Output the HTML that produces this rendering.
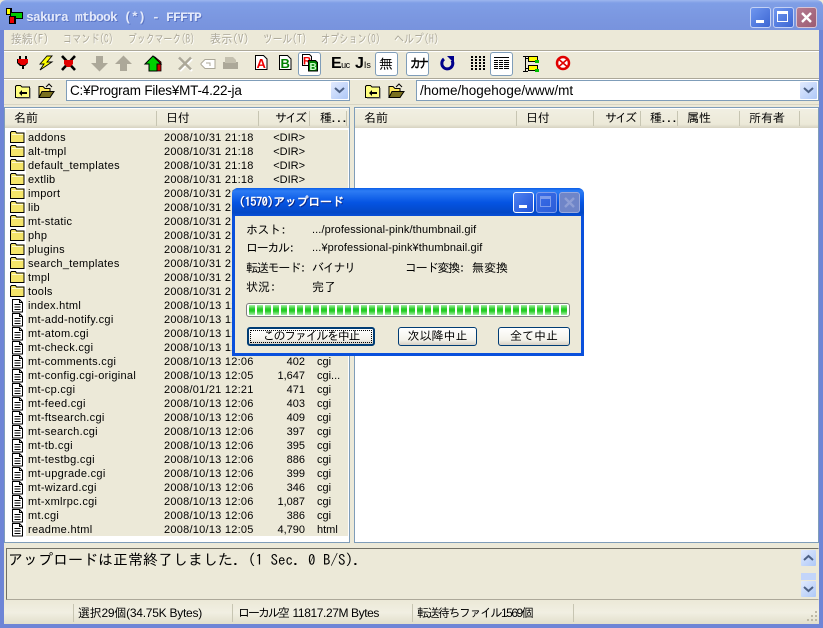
<!DOCTYPE html>
<html lang="ja"><head><meta charset="utf-8"><title>FFFTP</title>
<style>
html,body{margin:0;padding:0}
body{width:823px;height:628px;overflow:hidden;position:relative;background:#ece9d8;font:12px/14px "IPAGothic","Liberation Sans","Noto Sans CJK JP",sans-serif;color:#000}
div,span,svg{position:absolute;white-space:nowrap}
.menu span{top:32px;font-size:12px;color:#aca899;text-shadow:1px 1px 0 #fff;line-height:14px;transform-origin:0 0}
.hl{height:1px;background:#aca899}
.hw{height:1px;background:#fff}
.pressed{top:52px;width:21px;height:22px;background:#fff;border:1px solid #7f9db9;border-radius:3px;box-sizing:content-box}
.hdr{top:109px;height:19px;background:linear-gradient(#f1efe2 0,#ece9d8 80%,#d6d2c0 100%)}
.hdr span{top:2px;line-height:14px}
.sep{top:111px;width:1px;height:15px;background:#c7c5b2}
.row{left:0;width:346px;height:14px;line-height:14px;margin-top:1px}
.row span{top:0;font-family:"Liberation Sans","IPAGothic",sans-serif;font-size:11px}
.n{left:28px;letter-spacing:.3px}.d{left:164px;letter-spacing:.25px}.s{right:41px;width:60px;text-align:right}.t{left:317px}
.row svg{left:10px;top:-2px}
.combo{height:21px;background:#fff;border:1px solid #7f9db9;box-sizing:border-box}
.combo>div:first-child{font:13.5px/17px "Liberation Sans","IPAGothic",sans-serif}
.arrow{width:17px;height:17px;background:linear-gradient(135deg,#e1eafe,#aec8f7);border-radius:1px}
.btn{box-sizing:border-box;height:19px;border:1px solid #003c74;border-radius:3px;background:linear-gradient(#fff,#f4f2ea 70%,#d6d0c5);text-align:center;line-height:17px;font-size:12px}
.lb{font-size:12px;line-height:14px;font-family:"IPAGothic","Liberation Sans",sans-serif}
.stx{top:606px;font:12px/14px "Liberation Sans","IPAGothic",sans-serif}
.stx span{position:static}
</style></head><body>
<svg width="0" height="0"><defs>
<g id="fo"><path d="M.5 13.500V3.500l1-1h4l1 1.500h7.500v9.500z" fill="#f5e56a" stroke="#000"/><path d="M2 5.500h11" stroke="#fffbd0"/></g>
<g id="fi"><path d="M2.500 2.500h7l3 3v9.500h-10z" fill="#fff" stroke="#000"/><path d="M9.500 2.500v3h3M4.500 7.500h6M4.500 10h6M4.500 12.500h6" stroke="#000" fill="none"/></g>
</defs></svg>

<!-- window frame -->
<div style="left:0;top:0;width:823px;height:30px;background:linear-gradient(#9db6ee 0,#7f9ee6 10%,#7b97e0 60%,#7893dd 100%);border-radius:6px 6px 0 0"></div>
<div style="left:0;top:30px;width:4px;height:598px;background:#6e85d6"></div>
<div style="left:819px;top:30px;width:4px;height:598px;background:#6e85d6"></div>
<div style="left:0;top:624px;width:823px;height:4px;background:#6e85d6"></div>

<svg style="left:5px;top:7px" width="18" height="17" viewBox="0 0 18 17"><rect x="1" y="1" width="6" height="7" fill="#000"/><rect x="2" y="2" width="3" height="5" fill="#ff0"/><rect x="5" y="5" width="13" height="7" fill="#000"/><rect x="6" y="6" width="11" height="5" fill="#0c0"/><rect x="4" y="9" width="7" height="8" fill="#000"/><rect x="5" y="10" width="4" height="6" fill="#e00"/></svg>
<div style="left:26px;top:10px;font:bold 13px/15px 'Liberation Mono',monospace;color:#e3e9fa;letter-spacing:-.8px;text-shadow:1px 1px 0 #5a74c4">sakura mtbook (*) - FFFTP</div>

<!-- caption buttons -->
<div style="left:750px;top:7px;width:21px;height:21px;box-sizing:border-box;background:linear-gradient(135deg,#6f96ef,#3c66d3);border:1px solid #c4d2f5;border-radius:3px"><div style="left:5px;top:12px;width:8px;height:3px;background:#fff"></div></div>
<div style="left:773px;top:7px;width:21px;height:21px;box-sizing:border-box;background:linear-gradient(135deg,#6f96ef,#3c66d3);border:1px solid #c4d2f5;border-radius:3px"><div style="left:3px;top:3px;width:9px;height:7px;border:2px solid #fff;border-width:3px 1px 1px"></div></div>
<div style="left:796px;top:7px;width:21px;height:21px;box-sizing:border-box;background:linear-gradient(135deg,#b57b91,#9c5c72);border:1px solid #d9c5d4;border-radius:3px"><svg style="left:3px;top:3px" width="13" height="13"><path d="M2 2l9 9M11 2l-9 9" stroke="#fff" stroke-width="2.400"/></svg></div>

<!-- menu -->
<div class="menu" style="left:0;top:0;width:823px;height:50px">
<span style="left:11px;transform:scaleX(.9)">接続(F)</span><span style="left:63px;transform:scaleX(.76)">コマンド(C)</span><span style="left:128px;transform:scaleX(.74)">ブックマーク(B)</span><span style="left:210px;transform:scaleX(.93)">表示(V)</span><span style="left:263px;transform:scaleX(.81)">ツール(T)</span><span style="left:321px;transform:scaleX(.76)">オプション(O)</span><span style="left:394px;transform:scaleX(.83)">ヘルプ(H)</span>
</div>
<div class="hl" style="left:4px;top:50px;width:815px"></div><div class="hw" style="left:4px;top:51px;width:815px"></div>

<!-- toolbar -->
<div class="pressed" style="left:298px"></div><div class="pressed" style="left:375px"></div><div class="pressed" style="left:406px"></div><div class="pressed" style="left:490px"></div>
<svg style="left:0;top:50px" width="600" height="28" viewBox="0 50 600 28">
<!-- plug -->
<path d="M19 56h2v3h4v-3h2v3h1v4l-3 3h-1v3h-2v-3h-2l-3-3v-4h2z" fill="#000"/><path d="M19 60h8v3l-2 2h-4l-2-2z" fill="#e60000"/><rect x="18" y="59" width="10" height="4" fill="#e60000"/>
<!-- bolt -->
<path d="M52 56h-5l-7 8h4l-4 6 12-8h-5z" fill="#ffff00" stroke="#000" stroke-width=".9"/>
<!-- disconnect -->
<path d="M62 56l13 14M75 56l-13 14" stroke="#000" stroke-width="2.600"/><path d="M64 60h9v4l-3 3h-3l-3-3z" fill="#e00000"/>
<!-- down/up -->
<path d="M96 56h7v7h5l-8.500 8.500L91 63h5z" fill="#aca899"/><path d="M120 71h7v-7h5l-8.500-8.500L115 64h5z" fill="#aca899"/>
<!-- home up -->
<path d="M155 57l6 5v9h-4v-8z" fill="#d00000" stroke="#000" stroke-width=".8"/><path d="M153 56l8 8h-4v7h-8v-7h-4z" fill="#00d000" stroke="#000"/>
<!-- X -->
<path d="M180 59l12 12M192 59l-12 12" stroke="#fff" stroke-width="2.500"/><path d="M179 57.500l12 12M191 57.500l-12 12" stroke="#aca899" stroke-width="2.500"/>
<!-- rename + folder disabled -->
<path d="M205 59.500h10v9h-10l-4-4v-1z" fill="#fff" stroke="#aca899"/><path d="M206 63h4v3" stroke="#aca899" fill="none"/>
<path d="M223 62h15v7h-15z" fill="#aca899"/><path d="M225 57h8l3 3v3h-11z" fill="#c4c0af"/>
<!-- A B -->
<g font-family="Liberation Sans" font-weight="bold"><path d="M255.500 55.500h8l3.500 3.500v10.500h-11.500z" fill="#fff" stroke="#000"/><text x="256.500" y="68" fill="#f00000" font-size="13">A</text>
<path d="M279.500 55.500h8l3.500 3.500v10.500h-11.500z" fill="#fff" stroke="#000"/><text x="280.500" y="68" fill="#008000" font-size="13">B</text>
<path d="M302.500 54.500h7l2 2v9h-9z" fill="#fff" stroke="#000"/><text x="303" y="64.500" fill="#f00000" font-size="11">R</text><path d="M308.500 60.500h7l2 2v8.500h-9z" fill="#008000" stroke="#000"/><text x="309.500" y="70" fill="#c8ffc8" font-size="10">B</text></g>
<!-- refresh / grids -->
<path d="M444 59a5.500 5.500 0 1 0 8 1.500" fill="none" stroke="#00008b" stroke-width="3"/><path d="M447 56h7v7z" fill="#00008b"/>
<path d="M472 56v14M476 56v14M480 56v14M484 56v14" stroke="#000" stroke-dasharray="2 1" stroke-width="2"/>
<path d="M494 57.500h15M494 60.500h15M494 62.500h15M494 64.500h15M494 66.500h15M494 68.500h15" stroke="#000"/><path d="M498.500 59v11M503.500 59v11" stroke="#fff"/>
<!-- tree -->
<path d="M525.500 56v16M525 58.500h4M525 68.500h4M523 56.500h5M523 71.500h5" stroke="#000" fill="none"/><rect x="528.500" y="56.500" width="9" height="5" fill="#ffff00" stroke="#000"/><rect x="528.500" y="65.500" width="9" height="5" fill="#ffff00" stroke="#000"/><rect x="535" y="60" width="4" height="3" fill="#00c000"/><rect x="535" y="69" width="4" height="3" fill="#00c000"/>
<!-- stop -->
<circle cx="563" cy="63" r="6" fill="#fff" stroke="#e00000" stroke-width="2.500"/><path d="M559 59.500l8 7M567 59.500l-8 7" stroke="#e00000" stroke-width="1.600"/>
</svg>
<div style="left:331px;top:56px;font:bold 16px/16px 'Liberation Sans',sans-serif;letter-spacing:-.5px">E<span style="position:static;font:9px 'Liberation Sans',sans-serif">uc</span></div>
<div style="left:355px;top:56px;font:bold 16px/16px 'Liberation Sans',sans-serif">J<span style="position:static;font:9px 'Liberation Sans',sans-serif">Is</span></div>
<div style="left:379px;top:56px;font:14px/16px 'IPAGothic',sans-serif">無</div>
<div style="left:410px;top:56px;font:bold 13px/16px 'IPAGothic',sans-serif;letter-spacing:-3px;transform:scaleX(.82);transform-origin:0 0">カナ</div>

<div class="hl" style="left:4px;top:78px;width:815px"></div><div class="hw" style="left:4px;top:79px;width:815px"></div>

<!-- folder buttons left -->
<svg style="left:13px;top:82px" width="42" height="18" viewBox="0 0 42 18">
<path d="M2.500 15.500v-11l1-1h4l1.500 1.500h7.500v10.500z" fill="#ffff80" stroke="#000"/><path d="M17 6v10H4" stroke="#666" fill="none"/><path d="M6 11l3-3v2h5v2H9v2z" fill="#000"/>
<path d="M26 15.500V4.500h4l2 2h5v9z" fill="#ffe95e" stroke="#000"/><path d="M29 9.500h12l-4 6H26z" fill="#7a701e" stroke="#000"/><path d="M33 5l3-3 3 3" stroke="#000" fill="none"/>
</svg>
<svg style="left:363px;top:82px" width="42" height="18" viewBox="0 0 42 18">
<path d="M2.500 15.500v-11l1-1h4l1.500 1.500h7.500v10.500z" fill="#ffff80" stroke="#000"/><path d="M17 6v10H4" stroke="#666" fill="none"/><path d="M6 11l3-3v2h5v2H9v2z" fill="#000"/>
<path d="M26 15.500V4.500h4l2 2h5v9z" fill="#ffe95e" stroke="#000"/><path d="M29 9.500h12l-4 6H26z" fill="#7a701e" stroke="#000"/><path d="M33 5l3-3 3 3" stroke="#000" fill="none"/>
</svg>
<div class="combo" style="left:66px;top:80px;width:284px"><div style="left:3px;top:1px;letter-spacing:-.2px">C:¥Program Files¥MT-4.22-ja</div><div class="arrow" style="right:1px;top:1px"><svg style="left:3px;top:5px" width="11" height="7"><path d="M1 1l4.500 4L10 1" fill="none" stroke="#4d6185" stroke-width="2"/></svg></div></div>
<div class="combo" style="left:416px;top:80px;width:403px"><div style="left:3px;top:1px">/home/hogehoge/www/mt</div><div class="arrow" style="right:1px;top:1px"><svg style="left:3px;top:5px" width="11" height="7"><path d="M1 1l4.500 4L10 1" fill="none" stroke="#4d6185" stroke-width="2"/></svg></div></div>
<div class="hl" style="left:4px;top:104px;width:815px;background:#d8d5c4"></div>

<!-- left pane -->
<div style="left:4px;top:107px;width:346px;height:436px;background:#fff;border:1px solid #7f9db9;box-sizing:border-box"></div>
<div style="left:26px;top:130px;width:322px;height:406px;background:#ece9d8"></div>
<div class="hdr" style="left:5px;width:344px"><span style="left:9px">名前</span><span style="left:161px">日付</span><span style="left:270px;letter-spacing:-2px">サイズ</span><span style="left:315px;font-size:12px;letter-spacing:-.5px">種...</span></div>
<div class="sep" style="left:156px"></div><div class="sep" style="left:258px"></div><div class="sep" style="left:309px"></div><div class="sep" style="left:346px"></div>

<!-- right pane -->
<div style="left:354px;top:107px;width:465px;height:436px;background:#fff;border:1px solid #7f9db9;box-sizing:border-box"></div>
<div class="hdr" style="left:355px;width:463px"><span style="left:9px">名前</span><span style="left:171px">日付</span><span style="left:250px;letter-spacing:-2px">サイズ</span><span style="left:295px;letter-spacing:-.5px">種...</span><span style="left:332px">属性</span><span style="left:394px">所有者</span></div>
<div class="sep" style="left:516px"></div><div class="sep" style="left:593px"></div><div class="sep" style="left:640px"></div><div class="sep" style="left:677px"></div><div class="sep" style="left:739px"></div><div class="sep" style="left:799px"></div>

<!-- rows -->
<div class="row" style="top:130px"><svg width="16" height="16"><use href="#fo"/></svg><span class="n">addons</span><span class="d">2008/10/31 21:18</span><span class="s">&lt;DIR&gt;</span></div>
<div class="row" style="top:144px"><svg width="16" height="16"><use href="#fo"/></svg><span class="n">alt-tmpl</span><span class="d">2008/10/31 21:18</span><span class="s">&lt;DIR&gt;</span></div>
<div class="row" style="top:158px"><svg width="16" height="16"><use href="#fo"/></svg><span class="n">default_templates</span><span class="d">2008/10/31 21:18</span><span class="s">&lt;DIR&gt;</span></div>
<div class="row" style="top:172px"><svg width="16" height="16"><use href="#fo"/></svg><span class="n">extlib</span><span class="d">2008/10/31 21:18</span><span class="s">&lt;DIR&gt;</span></div>
<div class="row" style="top:186px"><svg width="16" height="16"><use href="#fo"/></svg><span class="n">import</span><span class="d">2008/10/31 21:18</span></div>
<div class="row" style="top:200px"><svg width="16" height="16"><use href="#fo"/></svg><span class="n">lib</span><span class="d">2008/10/31 21:18</span></div>
<div class="row" style="top:214px"><svg width="16" height="16"><use href="#fo"/></svg><span class="n">mt-static</span><span class="d">2008/10/31 21:18</span></div>
<div class="row" style="top:228px"><svg width="16" height="16"><use href="#fo"/></svg><span class="n">php</span><span class="d">2008/10/31 21:18</span></div>
<div class="row" style="top:242px"><svg width="16" height="16"><use href="#fo"/></svg><span class="n">plugins</span><span class="d">2008/10/31 21:18</span></div>
<div class="row" style="top:256px"><svg width="16" height="16"><use href="#fo"/></svg><span class="n">search_templates</span><span class="d">2008/10/31 21:18</span></div>
<div class="row" style="top:270px"><svg width="16" height="16"><use href="#fo"/></svg><span class="n">tmpl</span><span class="d">2008/10/31 21:18</span></div>
<div class="row" style="top:284px"><svg width="16" height="16"><use href="#fo"/></svg><span class="n">tools</span><span class="d">2008/10/31 21:18</span></div>
<div class="row" style="top:298px"><svg width="16" height="16"><use href="#fi"/></svg><span class="n">index.html</span><span class="d">2008/10/13 12:06</span></div>
<div class="row" style="top:312px"><svg width="16" height="16"><use href="#fi"/></svg><span class="n">mt-add-notify.cgi</span><span class="d">2008/10/13 12:06</span></div>
<div class="row" style="top:326px"><svg width="16" height="16"><use href="#fi"/></svg><span class="n">mt-atom.cgi</span><span class="d">2008/10/13 12:06</span></div>
<div class="row" style="top:340px"><svg width="16" height="16"><use href="#fi"/></svg><span class="n">mt-check.cgi</span><span class="d">2008/10/13 12:06</span></div>
<div class="row" style="top:354px"><svg width="16" height="16"><use href="#fi"/></svg><span class="n">mt-comments.cgi</span><span class="d">2008/10/13 12:06</span><span class="s">402</span><span class="t">cgi</span></div>
<div class="row" style="top:368px"><svg width="16" height="16"><use href="#fi"/></svg><span class="n">mt-config.cgi-original</span><span class="d">2008/10/13 12:05</span><span class="s">1,647</span><span class="t">cgi...</span></div>
<div class="row" style="top:382px"><svg width="16" height="16"><use href="#fi"/></svg><span class="n">mt-cp.cgi</span><span class="d">2008/01/21 12:21</span><span class="s">471</span><span class="t">cgi</span></div>
<div class="row" style="top:396px"><svg width="16" height="16"><use href="#fi"/></svg><span class="n">mt-feed.cgi</span><span class="d">2008/10/13 12:06</span><span class="s">403</span><span class="t">cgi</span></div>
<div class="row" style="top:410px"><svg width="16" height="16"><use href="#fi"/></svg><span class="n">mt-ftsearch.cgi</span><span class="d">2008/10/13 12:06</span><span class="s">409</span><span class="t">cgi</span></div>
<div class="row" style="top:424px"><svg width="16" height="16"><use href="#fi"/></svg><span class="n">mt-search.cgi</span><span class="d">2008/10/13 12:06</span><span class="s">397</span><span class="t">cgi</span></div>
<div class="row" style="top:438px"><svg width="16" height="16"><use href="#fi"/></svg><span class="n">mt-tb.cgi</span><span class="d">2008/10/13 12:06</span><span class="s">395</span><span class="t">cgi</span></div>
<div class="row" style="top:452px"><svg width="16" height="16"><use href="#fi"/></svg><span class="n">mt-testbg.cgi</span><span class="d">2008/10/13 12:06</span><span class="s">886</span><span class="t">cgi</span></div>
<div class="row" style="top:466px"><svg width="16" height="16"><use href="#fi"/></svg><span class="n">mt-upgrade.cgi</span><span class="d">2008/10/13 12:06</span><span class="s">399</span><span class="t">cgi</span></div>
<div class="row" style="top:480px"><svg width="16" height="16"><use href="#fi"/></svg><span class="n">mt-wizard.cgi</span><span class="d">2008/10/13 12:06</span><span class="s">346</span><span class="t">cgi</span></div>
<div class="row" style="top:494px"><svg width="16" height="16"><use href="#fi"/></svg><span class="n">mt-xmlrpc.cgi</span><span class="d">2008/10/13 12:06</span><span class="s">1,087</span><span class="t">cgi</span></div>
<div class="row" style="top:508px"><svg width="16" height="16"><use href="#fi"/></svg><span class="n">mt.cgi</span><span class="d">2008/10/13 12:06</span><span class="s">386</span><span class="t">cgi</span></div>
<div class="row" style="top:522px"><svg width="16" height="16"><use href="#fi"/></svg><span class="n">readme.html</span><span class="d">2008/10/13 12:05</span><span class="s">4,790</span><span class="t">html</span></div>

<!-- log -->
<div style="left:6px;top:548px;width:813px;height:52px;box-sizing:border-box;border:1px solid;border-color:#716f64 #ece9d8 #aca899 #716f64;background:#ece9d8"></div>
<div style="left:8px;top:552px;font:15px/16px 'IPAGothic',sans-serif">アップロードは正常終了しました. (1 Sec. 0 B/S).</div>
<div class="arrow" style="left:801px;top:550px;height:16px;width:15px"><svg style="left:2px;top:4px" width="11" height="7"><path d="M1 6l4.500-4L10 6" fill="none" stroke="#4d6185" stroke-width="2"/></svg></div>
<div style="left:801px;top:573px;width:15px;height:7px;background:#c3d5fa"></div>
<div class="arrow" style="left:801px;top:581px;height:16px;width:15px"><svg style="left:2px;top:5px" width="11" height="7"><path d="M1 1l4.500 4L10 1" fill="none" stroke="#4d6185" stroke-width="2"/></svg></div>

<!-- status -->
<div style="left:4px;top:601px;width:815px;height:23px;background:linear-gradient(#ece9d8,#f1efe2 50%,#e2dfcc)"></div>
<div style="left:73px;top:604px;width:1px;height:18px;background:#c7c5b2"></div>
<div style="left:232px;top:604px;width:1px;height:18px;background:#c7c5b2"></div>
<div style="left:412px;top:604px;width:1px;height:18px;background:#c7c5b2"></div>
<div style="left:573px;top:604px;width:1px;height:18px;background:#c7c5b2"></div>
<div class="stx" style="left:78px;letter-spacing:-.25px">選択29個(34.75K Bytes)</div>
<div class="stx" style="left:238px;letter-spacing:-.4px"><span style="letter-spacing:-2px">ローカル</span>空 11817.27M Bytes</div>
<div class="stx" style="left:417px;letter-spacing:-1.5px">転送待ちファイル1569個</div>
<svg style="left:806px;top:610px" width="13" height="13"><path d="M9 1h2v2H9zM5 5h2v2H5zM9 5h2v2H9zM1 9h2v2H1zM5 9h2v2H5zM9 9h2v2H9z" fill="#bdb9a6"/></svg>

<!-- dialog -->
<div style="left:232px;top:188px;width:352px;height:168px;background:#0a50dc;border-radius:6px 6px 0 0"></div>
<div style="left:232px;top:188px;width:352px;height:29px;background:linear-gradient(#0a5ee8 0,#2d7cf4 10%,#0554e3 50%,#0348c6 85%,#0a50dc 100%);border-radius:6px 6px 0 0"></div>
<div style="left:235px;top:216px;width:346px;height:137px;background:#ece9d8"></div>
<div style="left:239px;top:195px;font:bold 12px/14px 'IPAGothic',sans-serif;color:#fff;letter-spacing:-.3px;text-shadow:1px 1px 0 #0a2a8c">(1570)アップロード</div>
<div style="left:513px;top:192px;width:21px;height:21px;box-sizing:border-box;background:linear-gradient(135deg,#4f82f0,#1f52d8);border:1px solid #fff;border-radius:3px"><div style="left:5px;top:12px;width:8px;height:3px;background:#fff"></div></div>
<div style="left:536px;top:192px;width:21px;height:21px;box-sizing:border-box;background:linear-gradient(135deg,#3c6ee8,#2a5cd8);border:1px solid #7d9cec;border-radius:3px"><div style="left:3px;top:3px;width:9px;height:7px;border:2px solid #7d9cec;border-width:3px 1px 1px"></div></div>
<div style="left:559px;top:192px;width:21px;height:21px;box-sizing:border-box;background:#6f85c8;border:1px solid #9aa9dc;border-radius:3px"><svg style="left:3px;top:3px" width="13" height="13"><path d="M2 2l9 9M11 2l-9 9" stroke="#8f9fd4" stroke-width="2.400"/></svg></div>

<div class="lb" style="left:246px;top:223px;letter-spacing:-.5px">ホスト:</div>
<div class="lb" style="left:312px;top:223px;font-size:11px;letter-spacing:.1px;font-family:'Liberation Sans','IPAGothic',sans-serif">.../professional-pink/thumbnail.gif</div>
<div class="lb" style="left:246px;top:241px;letter-spacing:-1.3px">ローカル:</div>
<div class="lb" style="left:312px;top:241px;font-size:11px;letter-spacing:.1px;font-family:'Liberation Sans','IPAGothic',sans-serif">...¥professional-pink¥thumbnail.gif</div>
<div class="lb" style="left:246px;top:261px;letter-spacing:-1.2px">転送モード:</div>
<div class="lb" style="left:312px;top:261px;letter-spacing:-1.3px">バイナリ</div>
<div class="lb" style="left:405px;top:261px;letter-spacing:-1.2px">コード変換:</div>
<div class="lb" style="left:472px;top:261px">無変換</div>
<div class="lb" style="left:246px;top:280px">状況:</div>
<div class="lb" style="left:312px;top:280px">完了</div>

<div style="left:246px;top:303px;width:324px;height:14px;box-sizing:border-box;background:#fff;border:1px solid #7f7f7f;border-radius:3px"></div>
<div style="left:249px;top:305px;width:318px;height:10px;background:repeating-linear-gradient(90deg,transparent 0,transparent 6px,#fff 6px,#fff 8px),linear-gradient(#a8eea8,#24cc24 40%,#24cc24 60%,#a8eea8)"></div>

<div class="btn" style="left:247px;top:327px;width:128px;outline:1px dotted #000;outline-offset:-4px;border-width:2px;line-height:15px;letter-spacing:-1.3px">このファイルを中止</div>
<div class="btn" style="left:398px;top:327px;width:79px">次以降中止</div>
<div class="btn" style="left:498px;top:327px;width:72px">全て中止</div>
</body></html>
